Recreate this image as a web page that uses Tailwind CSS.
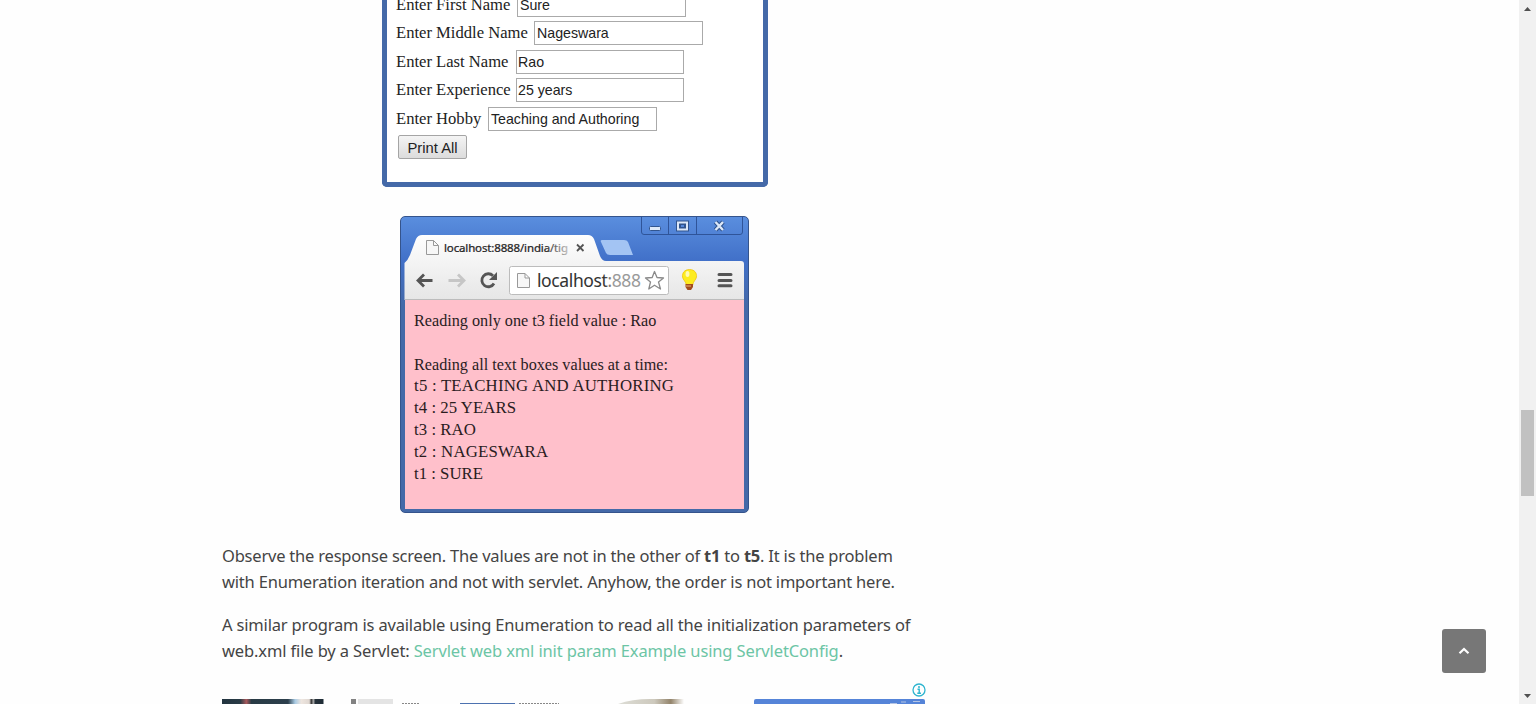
<!DOCTYPE html>
<html lang="en">
<head>
<meta charset="utf-8">
<title>Servlet parameters</title>
<script src="https://cdn.jsdelivr.net/npm/@tailwindcss/browser@4"></script>
</head>
<body class="bg-white">
<div class="flex h-[704px] w-[1536px] overflow-hidden bg-[#fefefe]">
  <main class="relative h-full w-[1519px] overflow-hidden">
    <article class="ml-[222px] flex w-[704px] flex-col font-['Noto_Sans',sans-serif] text-[#444]">

      <!-- form window -->
      <section class="ml-[160px] h-[187px] w-[386px] overflow-hidden rounded-b-[5px] border-x-[5px] border-b-[5px] border-[#4469a8] bg-white pl-[9px] font-['Liberation_Serif',serif] text-[16.6px] text-[#222]">
        <div class="-mt-[9.5px] flex h-[28.5px] items-center"><span class="w-[121px] whitespace-nowrap pt-px">Enter First Name</span><span class="flex h-[24px] w-[169px] items-center border border-[#aaa] pl-[2px] pt-px font-['Liberation_Sans',sans-serif] text-[14.2px]">Sure</span></div>
        <div class="flex h-[28.5px] items-center"><span class="w-[138px] whitespace-nowrap">Enter Middle Name</span><span class="flex h-[24px] w-[169px] items-center border border-[#aaa] pl-[2px] pt-px font-['Liberation_Sans',sans-serif] text-[14.2px]">Nageswara</span></div>
        <div class="flex h-[28.5px] items-center"><span class="w-[120px] whitespace-nowrap pt-px">Enter Last Name</span><span class="flex h-[24px] w-[168px] items-center border border-[#aaa] pl-px pt-px font-['Liberation_Sans',sans-serif] text-[14.2px]">Rao</span></div>
        <div class="flex h-[28.5px] items-center"><span class="w-[120px] whitespace-nowrap">Enter Experience</span><span class="flex h-[24px] w-[168px] items-center border border-[#aaa] pl-px pt-px font-['Liberation_Sans',sans-serif] text-[14.2px]">25 years</span></div>
        <div class="flex h-[28.5px] items-center"><span class="w-[92px] whitespace-nowrap pt-px">Enter Hobby</span><span class="flex h-[24px] w-[169px] items-center whitespace-nowrap border border-[#aaa] pl-[2px] pt-px font-['Liberation_Sans',sans-serif] text-[14.2px]">Teaching and Authoring</span></div>
        <div class="flex h-[28.5px] items-center pl-[2px]"><span class="flex h-[24px] w-[69px] items-center justify-center rounded-[2px] border border-[#a5a5a5] bg-linear-to-b from-[#f4f4f4] to-[#dcdcdc] pt-px font-['Liberation_Sans',sans-serif] text-[14.8px]">Print All</span></div>
      </section>

      <!-- result window -->
      <section class="mt-[29px] ml-[178px] flex h-[297px] w-[348.5px] flex-col overflow-hidden rounded-[5px] border border-[#35548c] bg-linear-to-b from-[#5a8ede] from-0% via-[#4170c8] via-15% to-[#4469a8] to-30%">
        <svg class="block h-[83px] w-[347px] shrink-0" viewBox="401 217 347 83" fill="none">
          <defs>
            <linearGradient id="bar" x1="0" y1="0" x2="0" y2="1"><stop offset="0" stop-color="#fefefe"/><stop offset="1" stop-color="#e6e6e6"/></linearGradient>
            <linearGradient id="fade" x1="545" y1="0" x2="570" y2="0" gradientUnits="userSpaceOnUse"><stop offset="0" stop-color="#222"/><stop offset="1" stop-color="#ccc"/></linearGradient>
            <linearGradient id="url" x1="604" y1="0" x2="612" y2="0" gradientUnits="userSpaceOnUse"><stop offset="0" stop-color="#333"/><stop offset="1" stop-color="#999"/></linearGradient>
          </defs>
          <path d="M641.5 217V232Q641.5 234.500 644 234.500H740Q742.500 234.500 742.500 232V217M668.500 217V234.500M696.500 217V234.500" stroke="#2f5499"/>
          <rect x="649.500" y="226.500" width="11" height="4" rx="1" fill="#dce8f8" stroke="#31558f"/>
          <rect x="678" y="222.500" width="9" height="7" stroke="#31558f" stroke-width="4"/>
          <rect x="678" y="222.500" width="9" height="7" stroke="#dce8f8" stroke-width="2"/>
          <rect x="680.500" y="224.500" width="4" height="3" stroke="#31558f"/>
          <path d="M715.500 222l7.500 8M723 222l-7.500 8" stroke="#31558f" stroke-width="4.500"/>
          <path d="M715.500 222l7.500 8M723 222l-7.500 8" stroke="#dce8f8" stroke-width="2.400"/>
          <path d="M404.500 300V263Q408 260 410 255L416 239Q418 235 422 235H588Q592 235 594 239L600 256Q602 261 606 261H741Q744 261 744 264V300Z" fill="url(#bar)"/>
          <path d="M405 299.500H744" stroke="#bcbcbc"/>
          <path d="M602 240H624Q627 240 628 242L633 255H610Q607 255 606 253L601 242Q600 240 602 240Z" fill="#a3c4f3"/>
          <path d="M426.500 240.500H433.500L438.500 245.500V254.500H426.500ZM433.500 240.500V245.500H438.500" fill="#f7f7f7" stroke="#999"/>
          <text x="444" y="252" textLength="124" font-family="Noto Sans, sans-serif" font-size="11.500" fill="url(#fade)" stroke="url(#fade)" stroke-width=".2">localhost:8888/india/tig</text>
          <path d="M577 244.500l6.500 6.500M583.500 244.500l-6.500 6.500" stroke="#555" stroke-width="1.800"/>
          <path d="M417.500 280.500H432.500M424 274.500L418 280.500L424 286.500" stroke="#555" stroke-width="2.800"/>
          <path d="M448.500 280.500H463M458 274.500L464 280.500L458 286.500" stroke="#c6c6c6" stroke-width="2.800"/>
          <path d="M494 283.500A6.500 6.500 0 1 1 493 275.700" stroke="#555" stroke-width="2.800"/>
          <path d="M497 272V280H489Z" fill="#555"/>
          <rect x="509.500" y="266.500" width="159" height="28" rx="2" fill="#fff" stroke="#bcbcbc"/>
          <path d="M517.500 273.500H525L529.500 278V287.500H517.500ZM525 273.500V278H529.500" fill="#f7f7f7" stroke="#999"/>
          <text x="537" y="287" textLength="104" font-family="Noto Sans, sans-serif" font-size="17.500" font-weight="400" fill="url(#url)">localhost:888</text>
          <path d="M654.500 271.500L657 277.500L663.500 278L658.500 282L660.500 289L654.500 285.200L648.800 289L650.500 282L645.500 278L652.200 277.500Z" fill="#fff" stroke="#8a8a8a" stroke-width="1.300" stroke-linejoin="round"/>
          <path d="M689.500 269.500C684.500 269.500 682 273 682.500 277C683 280 686 281.500 686.300 285H692.800C693 281.500 696 280 696.500 277C697 273 694.500 269.500 689.500 269.500Z" fill="#fdec20" stroke="#eec000" stroke-width=".7"/>
          <ellipse cx="687.500" cy="274" rx="2" ry="3" fill="#fffbb5"/>
          <path d="M685.500 284H693V287L691 290H687.500L685.500 287Z" fill="#a34c1c"/><path d="M686 286h5" stroke="#e8b070"/>
          <path d="M719 274.500H731M719 280.500H731M719 285.800H731" stroke="#555" stroke-width="3" stroke-linecap="round"/>
        </svg>
        <div class="mx-[4px] mb-[3px] flex-1 whitespace-nowrap bg-[#ffc0cb] pt-[10px] pl-[9px] font-['Liberation_Serif',serif] text-[16.8px] leading-[22px] text-[#2a1c1e]">
          <p class="text-[16.2px]">Reading only one t3 field value : Rao</p>
          <p class="mt-[22px] text-[16.2px]">Reading all text boxes values at a time:</p>
          <p class="-mt-px tracking-[0.22px]">t5 : TEACHING AND AUTHORING</p>
          <p class="tracking-[0.05px]">t4 : 25 YEARS</p>
          <p class="tracking-[0.05px]">t3 : RAO</p>
          <p class="tracking-[0.2px]">t2 : NAGESWARA</p>
          <p>t1 : SURE</p>
        </div>
      </section>

      <div class="mt-[30px] whitespace-nowrap text-[16.5px] leading-[26.4px]">
        <p><span class="tracking-[-0.21px]">Observe the response screen. The values are not in the other of <b>t1</b> to <b>t5</b>. It is the problem</span><br><span class="tracking-[-0.2px]">with Enumeration iteration and not with servlet. Anyhow, the order is not important here.</span></p>
        <p class="mt-[16px]"><span class="tracking-[-0.17px]">A similar program is available using Enumeration to read all the initialization parameters of</span><br><span class="tracking-[-0.13px]">web.xml file by a Servlet: <a class="text-[#6cc5a5]">Servlet web xml init param Example using ServletConfig</a>.</span></p>
      </div>

      <div class="mt-[18.400px] flex h-[14px] justify-end">
        <svg class="h-[14px] w-[14px]" viewBox="0 0 14 14" fill="none"><circle cx="7" cy="7" r="6" stroke="#2db4cf" stroke-width="1.300"/><circle cx="7" cy="4" r="1" fill="#2db4cf"/><path d="M5.500 6.200H7.200V10M5.300 10.200H9" stroke="#2db4cf" stroke-width="1.400"/></svg>
      </div>
      <!-- visible top edge of the thumbnails -->
      <svg class="mt-px block h-[6px] w-[704px]" viewBox="222 698 704 6">
        <defs>
          <linearGradient id="t1"><stop offset="0" stop-color="#223440"/><stop offset=".18" stop-color="#293b45"/><stop offset=".24" stop-color="#a8595c"/><stop offset=".29" stop-color="#293b45"/><stop offset=".65" stop-color="#2c3f4c"/><stop offset=".72" stop-color="#a9cbe4"/><stop offset=".78" stop-color="#eee6e0"/><stop offset=".86" stop-color="#e0d8d2"/><stop offset=".88" stop-color="#333"/><stop offset=".9" stop-color="#aaa"/><stop offset=".92" stop-color="#26323a"/><stop offset="1" stop-color="#1e2c36"/></linearGradient>
          <linearGradient id="t2"><stop offset="0" stop-color="#ddddd6"/><stop offset=".55" stop-color="#cdc9bd"/><stop offset=".8" stop-color="#94856c"/><stop offset="1" stop-color="#fefefe"/></linearGradient>
        </defs>
        <rect x="222" y="699" width="101.500" height="5" fill="url(#t1)"/>
        <rect x="351" y="699" width="5" height="5" fill="#828282"/><rect x="358" y="699" width="35" height="5" fill="#e4e4e4"/>
        <path d="M402 703.500H419M519 703.500H559" stroke="#888" stroke-dasharray="2 1"/>
        <rect x="460" y="703" width="55" height="1" fill="#4d72b0"/>
        <path d="M618 704Q632 699 650 699H684V704Z" fill="url(#t2)"/>
        <path d="M754 704V701Q754 699 756 699H923Q925 699 925 701V704Z" fill="#5584d8"/>
        <path d="M890 703.500H897M901 702H906M913 701.500H920" stroke="#b4c4e4"/>
      </svg>
    </article>

    <button class="absolute top-[629px] left-[1442px] flex h-[44px] w-[44px] items-center justify-center rounded-[3px] bg-[#777]"><svg class="h-[8px] w-[12px]" viewBox="0 0 12 8" fill="none"><path d="M1.500 6.300L6 2L10.500 6.300" stroke="#fff" stroke-width="2.200"/></svg></button>
  </main>
  <aside class="flex h-full w-[17px] flex-col items-center bg-[#f1f1f1]">
    <svg class="h-[17px] w-[17px]" viewBox="0 0 17 17"><path d="M5 11L8.500 7L12 11Z" fill="#505050"/></svg>
    <div class="mt-[392.500px] h-[86px] w-[13px] bg-[#c1c1c1]"></div>
    <svg class="mt-auto h-[17px] w-[17px]" viewBox="0 0 17 17"><path d="M5 7L8.500 11L12 7Z" fill="#505050"/></svg>
  </aside>
</div>
</body>
</html>
